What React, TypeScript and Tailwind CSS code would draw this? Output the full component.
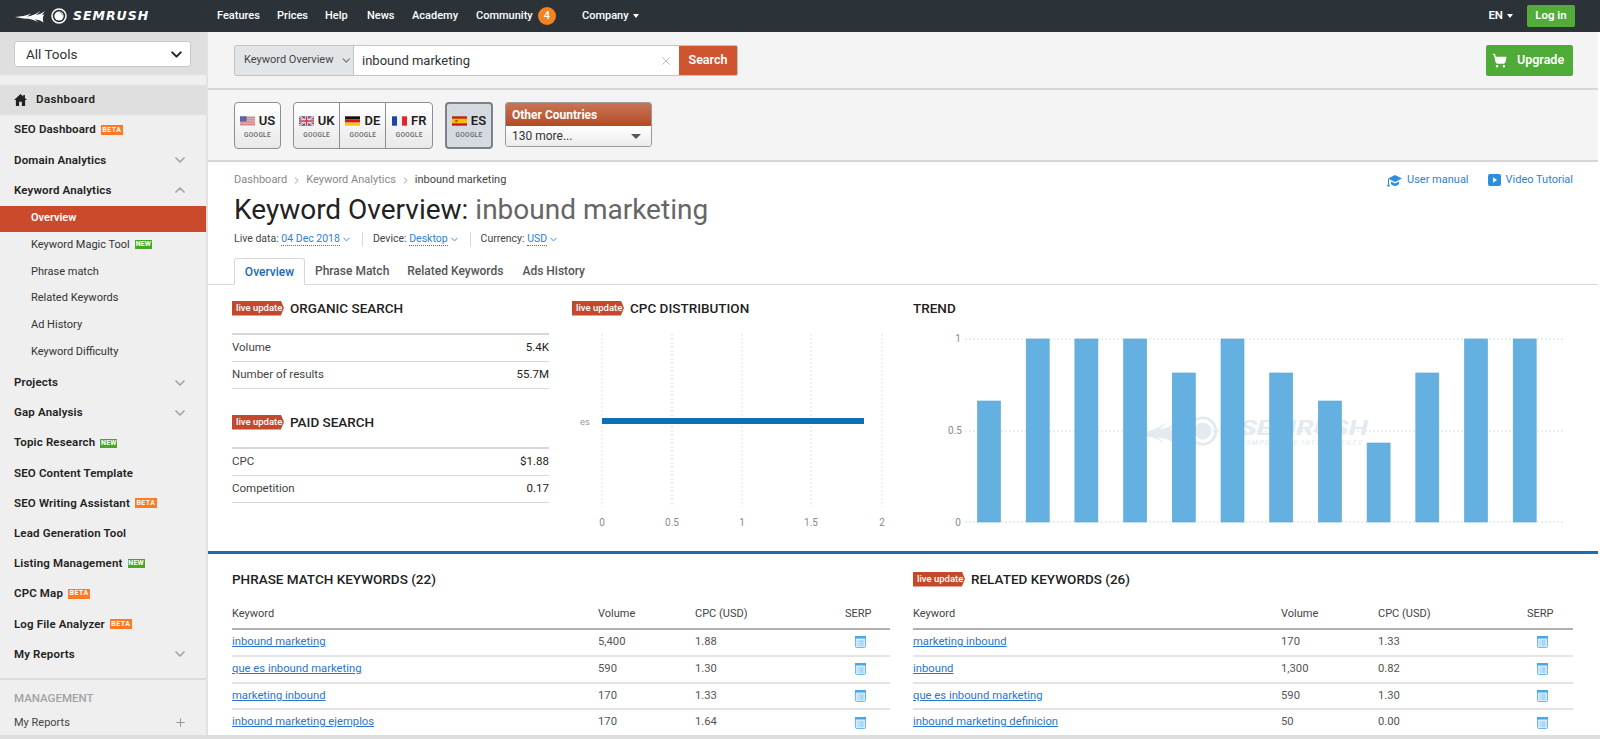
import React from 'react';
import { ChevronDown, ChevronUp, X, Plus, ShoppingCart } from 'lucide-react';

const Logo = ({ className = '' }: { className?: string }) => (
  <svg viewBox="0 0 52 16" className={className}>
    <path fill="#fff" d="M0 9C6 8.800 11 8 16 5.600c-1.500 1.400-2.500 2.100-4 2.900 4.500-.4 9-2.300 13-5.500-1.200 1.700-2.400 2.900-4 3.900 3-.2 6-1.500 9-3.900-1.200 1.700-2.400 3-3.300 4.100.8-.2 1.700-.4 2.600-.9-1.700 2.700-1.800 5.500-.8 8.400-2.500-2-5.400-3.100-9-3.100 1.400.8 2.600 1.600 3.800 2.700C19 11.800 14 10.200 9 10.400c.8.300 1.600.7 2.400 1.200C7.500 10 4 9.500 0 9z" />
    <circle cx="44" cy="8" r="7" fill="none" stroke="#fff" strokeWidth="1.500" />
    <circle cx="44" cy="8" r="4.600" fill="#fff" />
    <path fill="#2c3338" d="M44.500 4.300a3.700 3.700 0 0 1 3.200 3.400 5.200 5.200 0 0 0-3.200-3.400z" />
  </svg>
);

const Flag = ({ code }: { code: string }) => (
  <svg viewBox="0 0 16 10" className="w-[15px] h-[10px] shrink-0">
    {code === 'US' && (
      <>
        <rect width="16" height="10" fill="#e9e4e4" />
        <path d="M0 1h16M0 3h16M0 5h16M0 7h16M0 9h16" stroke="#c9565c" strokeWidth="1" />
        <rect width="7" height="5.500" fill="#5a63a8" />
      </>
    )}
    {code === 'UK' && (
      <>
        <rect width="16" height="10" fill="#39408f" />
        <path d="M0 0l16 10M16 0L0 10" stroke="#fff" strokeWidth="2" />
        <path d="M0 0l16 10M16 0L0 10" stroke="#d0333f" strokeWidth=".7" />
        <path d="M8 0v10M0 5h16" stroke="#fff" strokeWidth="3.400" />
        <path d="M8 0v10M0 5h16" stroke="#d0333f" strokeWidth="1.800" />
      </>
    )}
    {code === 'DE' && (
      <>
        <rect width="16" height="3.400" fill="#111" />
        <rect y="3.400" width="16" height="3.300" fill="#d8151d" />
        <rect y="6.700" width="16" height="3.300" fill="#f3c414" />
      </>
    )}
    {code === 'FR' && (
      <>
        <rect width="5.400" height="10" fill="#1c44a8" />
        <rect x="5.400" width="5.300" height="10" fill="#f2f2f2" />
        <rect x="10.700" width="5.300" height="10" fill="#e0262e" />
      </>
    )}
    {code === 'ES' && (
      <>
        <rect width="16" height="10" fill="#c9191e" />
        <rect y="2.500" width="16" height="5" fill="#f5c400" />
        <rect x="3.500" y="3.800" width="2.500" height="2.400" fill="#b5521b" />
      </>
    )}
  </svg>
);

const CountryCell = ({ code }: { code: string }) => (
  <div className="flex flex-col items-center justify-center w-full h-full">
    <div className="flex items-center gap-[4px] h-[16px]">
      <Flag code={code} />
      <span className="text-[13px] leading-none font-semibold text-[#222]">{code}</span>
    </div>
    <span className="text-[6.500px] leading-none mt-[3px] font-medium text-[#666] tracking-[0.3px]">GOOGLE</span>
  </div>
);

const Beta = () => (
  <span className="ml-[5px] inline-flex items-center justify-center w-[22px] h-[10px] bg-[#ff7a22] text-white text-[7px] leading-none font-bold tracking-[0.5px]">BETA</span>
);
const New = () => (
  <span className="ml-[5px] inline-flex items-center justify-center w-[17px] h-[9px] bg-[#48a824] text-white text-[7px] leading-none font-bold">NEW</span>
);

const LiveUpdate = () => (
  <span className="inline-flex items-center w-[52px] h-[15px] pl-[4px] bg-[#c4492c] text-white text-[9.500px] leading-none whitespace-nowrap [clip-path:polygon(0_0,94%_0,100%_50%,94%_100%,0_100%)]">live update</span>
);

const mainItems: { label: string; tag?: 'beta' | 'new'; arrow?: boolean }[] = [
  { label: 'Projects', arrow: true },
  { label: 'Gap Analysis', arrow: true },
  { label: 'Topic Research', tag: 'new' },
  { label: 'SEO Content Template' },
  { label: 'SEO Writing Assistant', tag: 'beta' },
  { label: 'Lead Generation Tool' },
  { label: 'Listing Management', tag: 'new' },
  { label: 'CPC Map', tag: 'beta' },
  { label: 'Log File Analyzer', tag: 'beta' },
  { label: 'My Reports', arrow: true },
];

const SideRow = ({ label, tag, arrow, up }: { label: string; tag?: 'beta' | 'new'; arrow?: boolean; up?: boolean }) => (
  <div className="flex items-center h-[30.200px] pl-[14px] pr-[18px] text-[11.500px] font-semibold tracking-[0.15px] text-[#222] shrink-0">
    <span>{label}</span>
    {tag === 'beta' && <Beta />}
    {tag === 'new' && <New />}
    {arrow && !up && <ChevronDown className="ml-auto w-[16px] h-[16px] text-[#a5a5a5]" strokeWidth={2.600} />}
    {up && <ChevronUp className="ml-auto w-[16px] h-[16px] text-[#a5a5a5]" strokeWidth={2.600} />}
  </div>
);

const SubRow = ({ label, tag }: { label: string; tag?: boolean }) => (
  <div className="flex items-center h-[26.800px] pl-[31px] text-[11px] text-[#333] shrink-0">
    <span>{label}</span>
    {tag && <New />}
  </div>
);

const Sidebar = () => (
  <aside className="w-[208px] shrink-0 bg-[#efefef] border-r-2 border-[#e2e2e2] flex flex-col">
    <div className="h-[43px] bg-[#dfdfdf] pt-[9px] px-[14px] shrink-0">
      <div className="h-[26px] w-[177px] bg-white border border-[#c8c8c8] rounded-[3px] flex items-center justify-between pl-[11px] pr-[5px] text-[13.500px] text-[#333]">
        All Tools
        <ChevronDown className="w-[17px] h-[17px] text-[#222]" strokeWidth={2.800} />
      </div>
    </div>
    <div className="h-[10px] shrink-0" />
    <div className="h-[30px] bg-[#dfdfdf] flex items-center pl-[14px] text-[11.500px] font-semibold text-[#222] tracking-[0.4px] shrink-0">
      <svg viewBox="0 0 14 13" className="w-[13px] h-[12px] mr-[9px]">
        <path fill="#222" d="M7 0L0 6.500h2V13h3.500V8.500h3V13H12V6.500h2l-2.200-2.100V1h-1.800v1.700z" />
      </svg>
      Dashboard
    </div>
    <SideRow label="SEO Dashboard" tag="beta" />
    <SideRow label="Domain Analytics" arrow />
    <SideRow label="Keyword Analytics" up />
    <div className="h-[26px] bg-[#cb4a2b] flex items-center pl-[31px] text-[11px] font-semibold text-white shrink-0">Overview</div>
    <SubRow label="Keyword Magic Tool" tag />
    <SubRow label="Phrase match" />
    <SubRow label="Related Keywords" />
    <SubRow label="Ad History" />
    <SubRow label="Keyword Difficulty" />
    <div className="h-[2px] shrink-0" />
    {mainItems.map((m) => (
      <SideRow key={m.label} {...m} />
    ))}
    <div className="mt-[9px] border-t-2 border-[#dcdcdc] h-[33px] flex items-end pl-[14px] pb-[4px] text-[11.500px] font-medium text-[#a3a3a3] shrink-0">MANAGEMENT</div>
    <div className="flex items-center justify-between h-[23px] pl-[14px] pr-[19px] text-[11px] text-[#444] shrink-0">
      My Reports
      <Plus className="w-[13px] h-[13px] text-[#999]" strokeWidth={2} />
    </div>
  </aside>
);

const TopBar = () => (
  <header className="h-[32px] bg-[#2c3338] flex items-center text-white text-[11px] font-medium shrink-0 relative">
    <div className="flex items-center pl-[15px] w-[217px] shrink-0">
      <Logo className="w-[52px] h-[16px]" />
      <span className="ml-[6px] text-[12.500px] leading-none font-bold italic tracking-[1px] [font-family:'DejaVu_Sans',sans-serif]">SEMRUSH</span>
    </div>
    <nav className="flex items-center">
      <span className="w-[60px]">Features</span>
      <span className="w-[48px]">Prices</span>
      <span className="w-[42px]">Help</span>
      <span className="w-[45px]">News</span>
      <span className="w-[64px]">Academy</span>
      <span className="w-[62px]">Community</span>
      <span className="w-[18px] h-[18px] rounded-full bg-[#f5831f] flex items-center justify-center text-[11px]">4</span>
      <span className="ml-[26px]">Company</span>
      <span className="ml-[4px] w-0 h-0 border-x-[3.500px] border-x-transparent border-t-[4px] border-t-white" />
    </nav>
    <div className="ml-auto flex items-center pr-[25px]">
      <span className="text-[11.500px] font-semibold">EN</span>
      <span className="ml-[4px] w-0 h-0 border-x-[3.500px] border-x-transparent border-t-[4px] border-t-white" />
      <button className="ml-[14px] w-[48px] h-[22px] rounded-[2px] bg-[#53ab3c] text-white text-[11.500px] font-semibold">Log in</button>
    </div>
  </header>
);

const SearchStrip = () => (
  <div className="h-[58px] bg-[#f4f4f4] border-b-2 border-[#d6d6d6] flex items-start pt-[13px] pl-[26px] pr-[25px] shrink-0">
    <div className="flex w-[504px] h-[31px] border border-[#c4c4c4] rounded-[2px] overflow-hidden">
      <div className="w-[119px] shrink-0 bg-[#e2e5e8] flex items-center pl-[9px] text-[11px] whitespace-nowrap text-[#444] border-r border-[#c4c4c4]">
        Keyword Overview
        <ChevronDown className="w-[13px] h-[13px] ml-[7px] text-[#777]" strokeWidth={2.400} />
      </div>
      <div className="flex-1 bg-white flex items-center pl-[8px] pr-[6px] text-[13px] text-[#333]">
        inbound marketing
        <X className="ml-auto w-[14px] h-[14px] text-[#bbb]" strokeWidth={1.600} />
      </div>
      <div className="w-[58px] bg-[#cf5531] text-white text-[12.500px] font-semibold flex items-center justify-center">Search</div>
    </div>
    <button className="ml-auto w-[87px] h-[31px] bg-[#4fab38] rounded-[2px] flex items-center pl-[6px] text-white text-[12.500px] font-semibold">
      <ShoppingCart className="w-[15px] h-[15px] mr-[10px]" fill="#fff" strokeWidth={2} />
      Upgrade
    </button>
  </div>
);

const CountryStrip = () => (
  <div className="h-[72px] bg-[#f4f4f4] border-b-2 border-[#d6d6d6] flex items-start pt-[12px] pl-[26px] shrink-0">
    <div className="w-[47px] h-[47px] border border-[#8f8f8f] rounded-[4px] bg-gradient-to-b from-white to-[#e9e9e9]">
      <CountryCell code="US" />
    </div>
    <div className="ml-[12px] w-[140px] h-[47px] border border-[#8f8f8f] rounded-[4px] bg-gradient-to-b from-white to-[#e9e9e9] flex divide-x divide-[#8f8f8f]">
      <CountryCell code="UK" />
      <CountryCell code="DE" />
      <CountryCell code="FR" />
    </div>
    <div className="ml-[12px] w-[48px] h-[47px] border-2 border-[#7e8287] rounded-[4px] bg-[#d5dae1]">
      <CountryCell code="ES" />
    </div>
    <div className="ml-[12px] w-[147px] h-[45px] border border-[#9a9a9a] rounded-[3px] overflow-hidden flex flex-col">
      <div className="h-[23px] bg-gradient-to-b from-[#c87555] to-[#b54a22] text-white text-[12px] font-bold flex items-center pl-[6px]">Other Countries</div>
      <div className="flex-1 bg-gradient-to-b from-white to-[#ececec] flex items-center justify-between pl-[6px] pr-[10px] text-[12px] text-[#333]">
        130 more...
        <span className="w-0 h-0 border-x-[5px] border-x-transparent border-t-[5px] border-t-[#555]" />
      </div>
    </div>
  </div>
);

const Dropdown = ({ label, value }: { label: string; value: string }) => (
  <span className="flex items-center">
    <span className="text-[#444]">{label}:&nbsp;</span>
    <span className="text-[#2f80d8] border-b border-dotted border-[#2f80d8] leading-[13px]">{value}</span>
    <ChevronDown className="w-[11px] h-[11px] ml-[1px] text-[#2f80d8]" strokeWidth={2} />
  </span>
);

const ChevronRightGlyph = () => (
  <svg viewBox="0 0 6 8" className="w-[5px] h-[7px] mx-[7px]">
    <path d="M1 .5L5 4 1 7.500" fill="none" stroke="#999" strokeWidth="1.100" />
  </svg>
);

const PageHead = () => (
  <div className="shrink-0">
    <div className="flex items-center h-[18px] mt-[9px] pl-[26px] pr-[25px] text-[11px] text-[#888]">
      <span>Dashboard</span>
      <ChevronRightGlyph />
      <span>Keyword Analytics</span>
      <ChevronRightGlyph />
      <span className="text-[#444]">inbound marketing</span>
      <span className="ml-auto flex items-center text-[#2f80d8]">
        <svg viewBox="0 0 15 13" className="w-[15px] h-[13px] mr-[5px]">
          <path fill="#2c8ee0" d="M8 1L1 4.500 8 8l7-3.500zM4 7.500v2.600C5 11.300 6.500 12 8 12s3-.7 4-1.900V7.500L8 9.500z" />
          <path d="M1.500 5v5.500" stroke="#2c8ee0" strokeWidth="1" />
          <circle cx="1.500" cy="11.500" r="1.200" fill="#2c8ee0" />
        </svg>
        User manual
        <svg viewBox="0 0 13 12" className="w-[13px] h-[12px] ml-[19px] mr-[5px]">
          <rect width="13" height="12" rx="2" fill="#2c8ee0" />
          <path d="M5 3.200l4 2.800-4 2.800z" fill="#fff" />
        </svg>
        Video Tutorial
      </span>
    </div>
    <h1 className="h-[38px] pl-[26px] flex items-center text-[28px] leading-none font-normal text-[#222] mt-[2px] whitespace-pre">
      Keyword Overview: <span className="text-[#666]">inbound marketing</span>
    </h1>
    <div className="flex items-center h-[16px] mt-[2px] pl-[26px] text-[10.500px]">
      <Dropdown label="Live data" value="04 Dec 2018" />
      <span className="w-px h-[14px] bg-[#d8d8d8] mx-[10px]" />
      <Dropdown label="Device" value="Desktop" />
      <span className="w-px h-[14px] bg-[#d8d8d8] mx-[10px]" />
      <Dropdown label="Currency" value="USD" />
    </div>
    <div className="flex items-end h-[38px] border-b border-[#d8d8d8] pl-[26px] text-[12px] font-medium text-[#555]">
      <span className="w-[71px] h-[27px] -mb-px border border-b-white border-[#d8d8d8] rounded-t-[3px] bg-white flex items-center justify-center text-[#2269b5]">Overview</span>
      <span className="h-[26px] flex items-center ml-[10px]">Phrase Match</span>
      <span className="h-[26px] flex items-center ml-[18px]">Related Keywords</span>
      <span className="h-[26px] flex items-center ml-[19px]">Ads History</span>
    </div>
  </div>
);

const SectionTitle = ({ live, children }: { live?: boolean; children: React.ReactNode }) => (
  <div className="flex items-center h-[20px] text-[13.500px] font-medium text-[#222]">
    {live && <span className="mr-[6px] flex"><LiveUpdate /></span>}
    {children}
  </div>
);

const StatTable = ({ rows }: { rows: [string, string][] }) => (
  <div className="mt-[15px] border-t-2 border-[#d6d6d6]">
    {rows.map(([k, v]) => (
      <div key={k} className="flex justify-between items-center h-[27px] border-b border-[#d8d8d8] text-[11.500px] text-[#444]">
        <span>{k}</span>
        <span className="text-[#222]">{v}</span>
      </div>
    ))}
  </div>
);

const CpcChart = () => {
  const ticks: [number, string][] = [[30, '0'], [100, '0.5'], [170, '1'], [239, '1.5'], [310, '2']];
  return (
    <svg width="325" height="200" className="block mt-[15px]">
      {ticks.map(([x, t]) => (
        <g key={t}>
          <line x1={x} x2={x} y1="1" y2="174" stroke="#d9e4e8" strokeDasharray="2 2" />
          <text x={x} y="193" textAnchor="middle" fontSize="10" fill="#8a8a8a">{t}</text>
        </g>
      ))}
      <rect x="30" y="85" width="262" height="6" fill="#0f70b7" />
      <text x="13" y="92" fontSize="9.500" textAnchor="middle" fill="#9a9a9a">es</text>
    </svg>
  );
};

const trend = [400, 338, 338, 338, 372, 338, 372, 400, 442, 372, 338, 338];

const TrendChart = () => (
  <svg width="655" height="205" className="block mt-[15px]">
    <g transform="translate(0,-332)">
      <line x1="52" x2="650" y1="338" y2="338" stroke="#cfe0e4" strokeDasharray="2 2" />
      <line x1="52" x2="650" y1="430" y2="430" stroke="#cfe0e4" strokeDasharray="2 2" />
      <line x1="52" x2="650" y1="521" y2="521" stroke="#cfe0e4" strokeDasharray="2 2" />
      <text x="45" y="341" fontSize="10" textAnchor="middle" fill="#8a8a8a">1</text>
      <text x="42" y="433" fontSize="10" textAnchor="middle" fill="#8a8a8a">0.5</text>
      <text x="45" y="525" fontSize="10" textAnchor="middle" fill="#8a8a8a">0</text>
      <svg x="207" y="415" width="98" height="30" viewBox="0 0 52 16">
        <path fill="#e3ebf1" d="M0 9C6 8.800 11 8 16 5.600c-1.500 1.400-2.500 2.100-4 2.900 4.500-.4 9-2.300 13-5.500-1.200 1.700-2.400 2.900-4 3.900 3-.2 6-1.500 9-3.900-1.200 1.700-2.400 3-3.300 4.100.8-.2 1.700-.4 2.600-.9-1.700 2.700-1.800 5.500-.8 8.400-2.500-2-5.400-3.100-9-3.100 1.400.8 2.600 1.600 3.800 2.700C19 11.800 14 10.200 9 10.400c.8.300 1.600.7 2.400 1.200C7.500 10 4 9.500 0 9z" />
        <circle cx="44" cy="8" r="7" fill="none" stroke="#e3ebf1" strokeWidth="1.500" />
        <circle cx="44" cy="8" r="4.600" fill="#e3ebf1" />
      </svg>
      <text x="327" y="434" fontSize="21" fontStyle="italic" fontWeight="700" textLength="128" lengthAdjust="spacingAndGlyphs" fill="#e3ebf1">SEMRUSH</text>
      <text x="327" y="444" fontSize="7" fontStyle="italic" textLength="122" fill="#dfe8ee">COMPETITIVE INTELLIGENCE</text>
      {trend.map((top, i) => (
        <rect key={i} x={64.500 + i * 48.700} y={top} width="23" height={521 - top} fill="#64b0e0" stroke="#55a5d8" strokeWidth="0.600" />
      ))}
    </g>
  </svg>
);

const SerpIcon = () => (
  <svg viewBox="0 0 11 12" className="w-[11px] h-[12px]">
    <rect x=".5" y=".5" width="10" height="11" rx="1" fill="#d5ebfb" stroke="#6cb9ef" />
    <rect width="11" height="2.500" fill="#4aa6ea" />
    <path d="M2.500 5h1M4.500 5h4M2.500 7h1M4.500 7h4M2.500 9h1M4.500 9h4" stroke="#6cb9ef" strokeWidth="0.800" />
  </svg>
);

const KeywordTable = ({ rows, volW, cpcW, serpW }: { rows: [string, string, string][]; volW: string; cpcW: string; serpW: string }) => (
  <div className="mt-[16px]">
    <div className="flex items-center h-[25px] border-b-2 border-[#b0b0b0] text-[11px] text-[#444] pb-[4px]">
      <span className="flex-1">Keyword</span>
      <span className={volW}>Volume</span>
      <span className={cpcW}>CPC (USD)</span>
      <span className={serpW}>SERP</span>
    </div>
    {rows.map(([k, v, c]) => (
      <div key={k} className="flex items-center h-[26.800px] border-b-2 border-[#e4e4e4] text-[11.250px] text-[#555]">
        <span className="flex-1 text-[#2a75cf] underline">{k}</span>
        <span className={volW}>{v}</span>
        <span className={cpcW}>{c}</span>
        <span className={serpW + ' pl-[10px]'}><SerpIcon /></span>
      </div>
    ))}
  </div>
);

const left: [string, string, string][] = [
  ['inbound marketing', '5,400', '1.88'],
  ['que es inbound marketing', '590', '1.30'],
  ['marketing inbound', '170', '1.33'],
  ['inbound marketing ejemplos', '170', '1.64'],
];
const right: [string, string, string][] = [
  ['marketing inbound', '170', '1.33'],
  ['inbound', '1,300', '0.82'],
  ['que es inbound marketing', '590', '1.30'],
  ['inbound marketing definicion', '50', '0.00'],
];

export default function App() {
  return (
    <div className="w-[1600px] h-[739px] overflow-hidden bg-white flex flex-col [font-family:Roboto,sans-serif]">
      <div className="h-[735px] flex flex-col overflow-hidden shrink-0">
        <TopBar />
        <div className="flex flex-1 min-h-0">
          <Sidebar />
          <main className="w-[1390px] shrink-0 flex flex-col">
            <SearchStrip />
            <CountryStrip />
            <PageHead />
            <div className="flex pl-[24px] pt-[13px] h-[269px] border-b-[3px] border-[#1a6db5] shrink-0">
              <section className="w-[317px] shrink-0">
                <SectionTitle live>ORGANIC SEARCH</SectionTitle>
                <StatTable rows={[['Volume', '5.4K'], ['Number of results', '55.7M']]} />
                <div className="mt-[23px]">
                  <SectionTitle live>PAID SEARCH</SectionTitle>
                </div>
                <StatTable rows={[['CPC', '$1.88'], ['Competition', '0.17']]} />
              </section>
              <section className="ml-[23px] w-[341px] shrink-0">
                <SectionTitle live>CPC DISTRIBUTION</SectionTitle>
                <CpcChart />
              </section>
              <section className="w-[655px] shrink-0">
                <SectionTitle>TREND</SectionTitle>
                <TrendChart />
              </section>
            </div>
            <div className="flex pl-[24px] pt-[15px]">
              <section className="w-[658px] shrink-0">
                <SectionTitle>PHRASE MATCH KEYWORDS (22)</SectionTitle>
                <KeywordTable rows={left} volW="w-[97px]" cpcW="w-[150px]" serpW="w-[45px]" />
              </section>
              <section className="ml-[23px] w-[660px] shrink-0">
                <SectionTitle live>RELATED KEYWORDS (26)</SectionTitle>
                <KeywordTable rows={right} volW="w-[97px]" cpcW="w-[149px]" serpW="w-[46px]" />
              </section>
            </div>
          </main>
          <div className="flex-1 bg-white" />
        </div>
      </div>
      <div className="flex-1 bg-[#dedede]" />
    </div>
  );
}
